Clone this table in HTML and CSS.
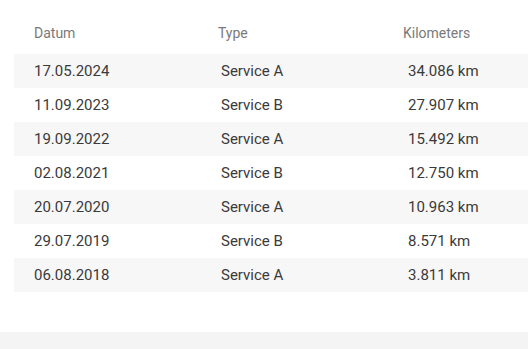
FILE: index.html
```html
<!DOCTYPE html>
<html lang="de">
<head>
<meta charset="utf-8">
<link rel="stylesheet" href="styles.css">
</head>
<body>
<div class="card">
  <div class="table">
    <div class="row head">
      <div class="c1">Datum</div>
      <div class="c2">Type</div>
      <div class="c3">Kilometers</div>
    </div>
    <div class="row data odd"><div class="c1">17.05.2024</div><div class="c2">Service A</div><div class="c3">34.086 km</div></div>
    <div class="row data"><div class="c1">11.09.2023</div><div class="c2">Service B</div><div class="c3">27.907 km</div></div>
    <div class="row data odd"><div class="c1">19.09.2022</div><div class="c2">Service A</div><div class="c3">15.492 km</div></div>
    <div class="row data"><div class="c1">02.08.2021</div><div class="c2">Service B</div><div class="c3">12.750 km</div></div>
    <div class="row data odd"><div class="c1">20.07.2020</div><div class="c2">Service A</div><div class="c3">10.963 km</div></div>
    <div class="row data"><div class="c1">29.07.2019</div><div class="c2">Service B</div><div class="c3">8.571 km</div></div>
    <div class="row data odd"><div class="c1">06.08.2018</div><div class="c2">Service A</div><div class="c3">3.811 km</div></div>
  </div>
</div>
</body>
</html>
```
FILE: styles.css
```css
html, body {
  margin: 0;
  padding: 0;
  background: #f4f4f4;
  font-family: Roboto, "Liberation Sans", sans-serif;
  overflow: hidden;
}
.card {
  background: #fff;
  height: 332px;
  box-shadow: 0 1px 4px rgba(0,0,0,0.16);
  padding: 14px 0 0 14px;
  box-sizing: border-box;
}
.table {
  display: flex;
  flex-direction: column;
}
.row {
  display: grid;
  grid-template-columns: 204px 185px 1fr;
  align-items: center;
}
.head {
  height: 40px;
  font-size: 14px;
  color: #7a7a7a;
}
.head .c1 { padding-left: 20px; padding-bottom: 3px; }
.head .c2, .head .c3 { padding-bottom: 3px; }
.data {
  height: 34px;
  font-size: 15px;
  color: #3a3a3a;
}
.data.odd { background: #f7f7f7; }
.data .c1 { padding-left: 20px; }
.data .c2 { padding-left: 3px; }
.data .c3 { padding-left: 5px; }
```
